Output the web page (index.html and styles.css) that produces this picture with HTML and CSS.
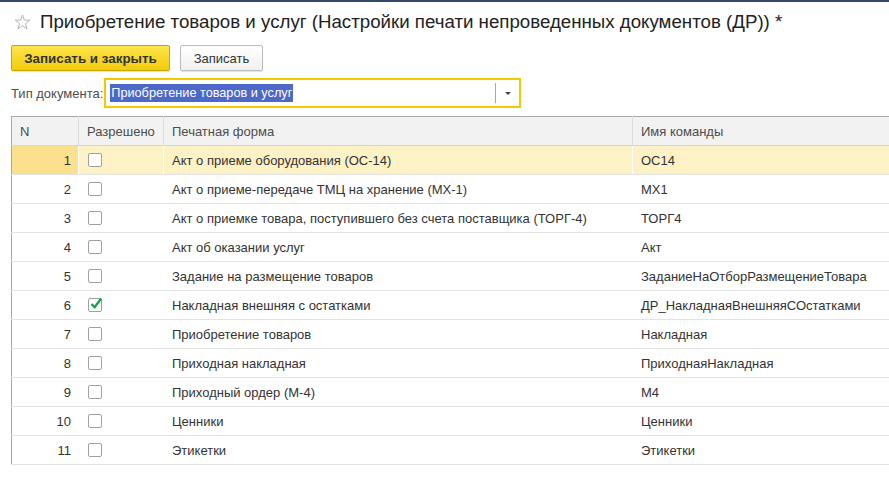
FILE: index.html
```
<!DOCTYPE html>
<html lang="ru">
<head>
    <meta charset="UTF-8">
    <title>Приобретение товаров и услуг</title>
    <link rel="stylesheet" href="styles.css">
</head>
<body>
    <div class="topline"></div>

    <div class="title">
        <svg class="star" width="17" height="16" viewBox="0 0 17 16">
            <path d="M8.5 1 L10.4 6.1 L15.8 6.2 L11.5 9.5 L13 14.8 L8.5 11.7 L4 14.8 L5.5 9.5 L1.2 6.2 L6.6 6.1 Z" fill="none" stroke="#b5b5b5" stroke-width="1"/>
        </svg>
        <h1>Приобретение товаров и услуг (Настройки печати непроведенных документов (ДР)) *</h1>
    </div>

    <div class="toolbar">
        <button class="btn primary">Записать и закрыть</button>
        <button class="btn">Записать</button>
    </div>

    <div class="field">
        <label>Тип документа:</label>
        <div class="select">
            <span class="value"><span class="selected">Приобретение товаров и услуг</span></span>
            <span class="sep"></span>
            <span class="arrow"></span>
        </div>
    </div>

    <table class="grid">
        <colgroup>
            <col class="c-n">
            <col class="c-ok">
            <col class="c-form">
            <col>
        </colgroup>
        <thead>
            <tr>
                <th>N</th>
                <th>Разрешено</th>
                <th>Печатная форма</th>
                <th>Имя команды</th>
            </tr>
        </thead>
        <tbody>
            <tr class="current">
                <td class="num">1</td>
                <td class="box"><span class="check"></span></td>
                <td>Акт о приеме оборудования (ОС-14)</td>
                <td>ОС14</td>
            </tr>
            <tr>
                <td class="num">2</td>
                <td class="box"><span class="check"></span></td>
                <td>Акт о приеме-передаче ТМЦ на хранение (МХ-1)</td>
                <td>МХ1</td>
            </tr>
            <tr>
                <td class="num">3</td>
                <td class="box"><span class="check"></span></td>
                <td>Акт о приемке товара, поступившего без счета поставщика (ТОРГ-4)</td>
                <td>ТОРГ4</td>
            </tr>
            <tr>
                <td class="num">4</td>
                <td class="box"><span class="check"></span></td>
                <td>Акт об оказании услуг</td>
                <td>Акт</td>
            </tr>
            <tr>
                <td class="num">5</td>
                <td class="box"><span class="check"></span></td>
                <td>Задание на размещение товаров</td>
                <td>ЗаданиеНаОтборРазмещениеТовара</td>
            </tr>
            <tr>
                <td class="num">6</td>
                <td class="box">
                    <span class="check">
                        <svg width="14" height="14" viewBox="0 0 14 14">
                            <path d="M2.5 7.2 L5.6 10.3 L12.2 1.6" fill="none" stroke="#16a34a" stroke-width="2.4"/>
                        </svg>
                    </span>
                </td>
                <td>Накладная внешняя с остатками</td>
                <td>ДР_НакладнаяВнешняяСОстатками</td>
            </tr>
            <tr>
                <td class="num">7</td>
                <td class="box"><span class="check"></span></td>
                <td>Приобретение товаров</td>
                <td>Накладная</td>
            </tr>
            <tr>
                <td class="num">8</td>
                <td class="box"><span class="check"></span></td>
                <td>Приходная накладная</td>
                <td>ПриходнаяНакладная</td>
            </tr>
            <tr>
                <td class="num">9</td>
                <td class="box"><span class="check"></span></td>
                <td>Приходный ордер (М-4)</td>
                <td>М4</td>
            </tr>
            <tr>
                <td class="num">10</td>
                <td class="box"><span class="check"></span></td>
                <td>Ценники</td>
                <td>Ценники</td>
            </tr>
            <tr>
                <td class="num">11</td>
                <td class="box"><span class="check"></span></td>
                <td>Этикетки</td>
                <td>Этикетки</td>
            </tr>
        </tbody>
    </table>
</body>
</html>
```

FILE: styles.css
```
body {
    margin: 0;
    background: #fff;
    color: #333;
    font-family: Arial, "Liberation Sans", sans-serif;
    overflow: hidden;
}

.topline {
    height: 2px;
    background: #34496a;
}

.title {
    height: 40px;
    display: flex;
    align-items: center;
    padding-left: 14px;
}

.star {
    margin-right: 9px;
    margin-top: -1px;
}

.title h1 {
    margin: 0;
    font-size: 18.7px;
    font-weight: normal;
    color: #222;
    white-space: nowrap;
}

.toolbar {
    padding: 3px 0 0 11px;
    display: flex;
    gap: 10px;
}

.btn {
    height: 26px;
    padding: 0 10px;
    font-family: Arial, "Liberation Sans", sans-serif;
    font-size: 13px;
    color: #333;
    background: linear-gradient(#fff, #f0f0f0);
    border: 1px solid #bdbdbd;
    border-radius: 2px;
    box-shadow: 0 1px 1px rgba(0, 0, 0, 0.12);
}

.btn.primary {
    width: 159px;
    font-size: 13.4px;
    font-weight: bold;
    color: #333;
    background: linear-gradient(#fde54a, #f2cb0a);
    border-color: #c8a700;
}

.btn:not(.primary) {
    width: 83px;
}

.field {
    margin-top: 7px;
    padding-left: 11px;
    display: flex;
    align-items: center;
}

.field label {
    font-size: 13px;
    color: #4d4d4d;
    margin-right: 1px;
}

.select {
    width: 413px;
    height: 26px;
    border: 2px solid #f5c800;
    display: flex;
    align-items: center;
    background: #fff;
}

.value {
    flex: 1;
    padding-left: 4px;
    font-size: 12.7px;
}

.selected {
    background: #4c68c8;
    color: #fff;
    padding: 2px 1px 2px 1px;
}

.sep {
    width: 1px;
    height: 20px;
    background: #a8a8a8;
}

.arrow {
    width: 23px;
    display: flex;
    justify-content: center;
}

.arrow::after {
    content: "";
    border-left: 3px solid transparent;
    border-right: 3px solid transparent;
    border-top: 3px solid #444;
}

.grid {
    margin: 8px 0 0 11px;
    width: calc(100% - 11px);
    border-collapse: collapse;
    border-left: 1px solid #a8a8a8;
    border-top: 1px solid #a8a8a8;
    font-size: 13px;
    table-layout: fixed;
}

.c-n { width: 67px; }
.c-ok { width: 85px; }
.c-form { width: 469px; }

.grid th {
    height: 28px;
    padding: 0 8px;
    text-align: left;
    font-weight: normal;
    color: #4d4d4d;
    background: #f2f2f2;
    border-left: 1px solid #dcdcdc;
    border-bottom: 1px solid #d6d6d6;
}

.grid th:first-child {
    border-left: none;
}

.grid td {
    height: 28px;
    padding: 0 8px;
    white-space: nowrap;
    overflow: hidden;
    border-bottom: 1px solid #e3e3e3;
    border-left: 1px solid #fff;
}

.grid td:first-child {
    border-left: none;
}

.grid td.num {
    text-align: right;
    padding-right: 7px;
}

.grid td.box {
    padding-left: 9px;
}

.grid tr.current td {
    background: #fdf1c6;
}

.grid tr.current td.num {
    background: #fbe08d;
}

.check {
    display: block;
    width: 12px;
    height: 12px;
    border: 1px solid #a0a0a0;
    border-radius: 2px;
    background: #fff;
    position: relative;
}

.check svg {
    position: absolute;
    left: 0;
    top: -2px;
}
```
